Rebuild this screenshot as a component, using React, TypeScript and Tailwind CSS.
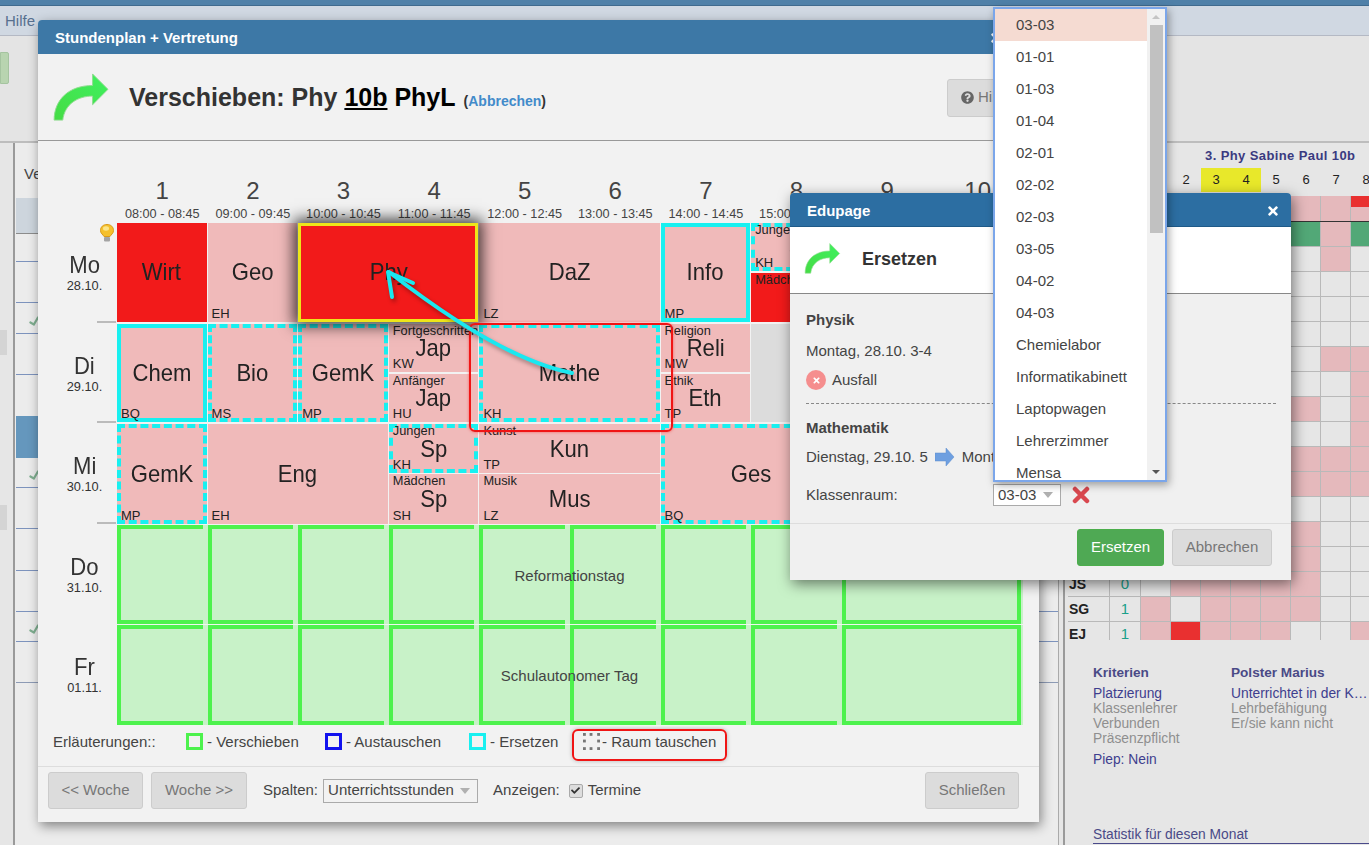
import React from "react";
import { FaQuestionCircle, FaTimes, FaCheck } from "react-icons/fa";

const hours = [
  ["1", "08:00 - 08:45"],
  ["2", "09:00 - 09:45"],
  ["3", "10:00 - 10:45"],
  ["4", "11:00 - 11:45"],
  ["5", "12:00 - 12:45"],
  ["6", "13:00 - 13:45"],
  ["7", "14:00 - 14:45"],
  ["8", "15:00 - 15:45"],
  ["9", "16:00 - 16:45"],
  ["10", "17:00 - 17:45"],
];

const days = [
  ["Mo", "28.10."],
  ["Di", "29.10."],
  ["Mi", "30.10."],
  ["Do", "31.10."],
  ["Fr", "01.11."],
];

const rooms = [
  "01-01", "01-03", "01-04", "02-01", "02-02", "02-03", "03-05", "04-02", "04-03",
  "Chemielabor", "Informatikabinett", "Laptopwagen", "Lehrerzimmer", "Mensa",
];

// g = grey, p = pink, r = red, s = green, t = pink with red top
const rightRows = [
  ["", "", "ggggpppt"],
  ["", "", "gggggsps"],
  ["", "", "ggggggpg"],
  ["", "", "gggggggg"],
  ["", "", "gggggggg"],
  ["", "", "gggggggg"],
  ["", "", "ggggggpp"],
  ["", "", "gggggggp"],
  ["", "", "gggggpgp"],
  ["", "", "gggggggp"],
  ["", "", "gggggppp"],
  ["", "", "gggggppp"],
  ["", "", "gggggggg"],
  ["", "", "gggggpgg"],
  ["", "", "gggggpgg"],
  ["JS", "0", "gpppppgg"],
  ["SG", "1", "pgppppgg"],
  ["EJ", "1", "prpppggp"],
];

const leftRows = [
  { h: "h-[36px]", line: "border-[#8c8c8c] bg-[#cdd5dd]" },
  { h: "h-[28px]", line: "border-[#7d93bd]" },
  { h: "h-[41px]", line: "border-[#7d93bd]" },
  { h: "h-[31px]", line: "border-[#7d93bd]", check: true },
  { h: "h-[41px]", line: "border-[#7d93bd]" },
  { h: "h-[41px]", line: "border-transparent" },
  { h: "h-[42px]", line: "border-[#6597bd] bg-[#6597bd]" },
  { h: "h-[30px]", line: "border-[#7d93bd]", check: true },
  { h: "h-[41px]", line: "border-[#7d93bd]" },
  { h: "h-[42px]", line: "border-[#7d93bd]" },
  { h: "h-[41px]", line: "border-[#7d93bd]" },
  { h: "h-[30px]", line: "border-[#7d93bd]", check: true },
  { h: "h-[41px]", line: "border-[#8d9bb5]" },
];

const CurvedArrow = ({ className = "" }: { className?: string }) => (
  <svg viewBox="0 0 60 52" className={className}>
    <defs>
      <linearGradient id="arrowFill" x1="0" y1="1" x2="1" y2="0">
        <stop offset="0" stopColor="#45dc45" />
        <stop offset="1" stopColor="#3ff05f" />
      </linearGradient>
    </defs>
    <path
      d="M1 49 C1 28 16 13 41 13 L41 1 L57 17 L41 33 L41 24 C26 24 12 32 10 49 Z"
      fill="url(#arrowFill)"
      stroke="#8fdc8f"
      strokeWidth="1"
    />
  </svg>
);

const Bulb = () => (
  <svg viewBox="0 0 14 18" className="h-[18px] w-[14px]">
    <path d="M7 0.5 C3 0.5 0.5 3 0.5 6.5 C0.5 9.5 3 10.5 4 12.5 H10 C11 10.5 13.5 9.5 13.5 6.5 C13.5 3 11 0.5 7 0.5 Z" fill="#f5c02c" stroke="#d99a1b" />
    <ellipse cx="6" cy="4.5" rx="3" ry="2.2" fill="#fbe58a" />
    <rect x="4" y="13" width="6" height="4.5" rx="1" fill="#a4a4a4" />
  </svg>
);

const SwapDots = () => (
  <svg viewBox="0 0 18 18" className="h-[17px] w-[17px]" fill="#777">
    <rect x="0" y="0" width="3" height="3" />
    <rect x="7" y="0" width="3" height="3" />
    <rect x="15" y="0" width="3" height="3" />
    <rect x="0" y="7" width="3" height="3" />
    <rect x="15" y="7" width="3" height="3" />
    <rect x="0" y="15" width="3" height="3" />
    <rect x="7" y="15" width="3" height="3" />
    <rect x="15" y="15" width="3" height="3" />
  </svg>
);

type LessonProps = {
  name: string;
  top?: string;
  room?: string;
  frame?: "solid" | "dashed";
  hot?: boolean;
  className?: string;
};

const Lesson = ({ name, top, room, frame, hot, className = "" }: LessonProps) => (
  <div
    className={`relative flex min-h-0 flex-1 items-center justify-center overflow-hidden text-[#222] ${
      hot ? "bg-[#f21a1a]" : "bg-[#f0baba]"
    } ${className}`}
  >
    {frame === "solid" && <div className="absolute inset-0 border-4 border-[#18f0f0]" />}
    {frame === "dashed" && <div className="absolute inset-0 border-4 border-dashed border-[#18f0f0]" />}
    {top && (
      <span className="absolute left-[4px] top-0 whitespace-nowrap text-[12.8px] leading-[14px]">{top}</span>
    )}
    <span className="relative scale-x-[0.92] text-[24px] leading-[28px]">{name}</span>
    {room && (
      <span className="absolute bottom-0 left-[4px] text-[13px] leading-[16px]">{room}</span>
    )}
  </div>
);

const GreenCell = ({ wide }: { wide?: boolean }) =>
  wide ? (
    <div className="col-span-2 mr-[2px] border-4 border-[#4df24d] bg-[#c8f2c8]" />
  ) : (
    <div className="mr-[5px] border-y-4 border-l-4 border-[#4df24d] bg-[#c8f2c8]" />
  );

const GreenRow = ({ label }: { label: string }) => (
  <div className="relative grid h-[100.6px] grid-cols-10 border-b border-[#eef7ee] bg-[#c8f2c8]">
    {[1, 2, 3, 4, 5, 6, 7, 8].map((n) => (
      <GreenCell key={n} />
    ))}
    <GreenCell wide />
    <div className="absolute left-[362px] top-0 flex h-full w-[181px] items-center justify-center pt-[3px] text-[15px] text-[#444]">
      {label}
    </div>
  </div>
);

const Select = ({ label, className = "" }: { label: string; className?: string }) => (
  <div className={`flex items-center border border-[#aaa] pl-[4px] pr-[7px] text-[15px] text-[#444] ${className}`}>
    <span className="flex-1 whitespace-nowrap">{label}</span>
    <span className="h-0 w-0 border-x-[5px] border-t-[6px] border-x-transparent border-t-[#b0b0b0]" />
  </div>
);

const GreyButton = ({ label, className = "" }: { label: string; className?: string }) => (
  <div className={`flex h-[37px] items-center justify-center rounded-[3px] border border-[#ccc] bg-[#dcdcdc] text-[15px] text-[#777] ${className}`}>
    {label}
  </div>
);

const LegendItem = ({ label, box, className = "" }: { label: string; box: string; className?: string }) => (
  <div className={`flex items-center gap-[4px] text-[15px] text-[#444] ${className}`}>
    <span className={`h-[17px] w-[17px] ${box}`} />
    <span>{label}</span>
  </div>
);

const Timetable = () => (
  <div className="relative ml-[67px] w-[906px]">
    {/* Mo */}
    <div className="grid h-[100.6px] grid-cols-10">
      <Lesson name="Wirt" hot className="mb-[2px] mr-px" />
      <Lesson name="Geo" room="EH" className="mb-[2px] mr-px" />
      <Lesson
        name="Phy"
        hot
        className="z-10 col-span-2 mb-[2px] mr-px border-[3px] border-[#eee51a] shadow-[0_0_14px_4px_rgba(0,0,0,0.75)]"
      />
      <Lesson name="DaZ" room="LZ" className="col-span-2 mb-[2px] mr-px" />
      <Lesson name="Info" room="MP" frame="solid" className="mb-[2px] mr-px" />
      <div className="mb-[2px] mr-px flex flex-col gap-[2px]">
        <Lesson name="S" top="Jungen" room="KH" frame="dashed" />
        <Lesson name="S" top="Mädchen" hot />
      </div>
    </div>
    {/* Di */}
    <div className="grid h-[100.6px] grid-cols-10">
      <Lesson name="Chem" room="BQ" frame="solid" className="mb-[2px] mr-px" />
      <Lesson name="Bio" room="MS" frame="dashed" className="mb-[2px] mr-px" />
      <Lesson name="GemK" room="MP" frame="dashed" className="mb-[2px] mr-px" />
      <div className="mb-[2px] mr-px flex flex-col gap-[2px]">
        <Lesson name="Jap" top="Fortgeschrittene" room="KW" />
        <Lesson name="Jap" top="Anfänger" room="HU" />
      </div>
      <Lesson name="Mathe" room="KH" frame="dashed" className="col-span-2 mb-[2px] mr-px" />
      <div className="mb-[2px] mr-px flex flex-col gap-[2px]">
        <Lesson name="Reli" top="Religion" room="MW" />
        <Lesson name="Eth" top="Ethik" room="TP" />
      </div>
      <div className="mb-[2px] mr-px bg-[#dcdcdc]" />
    </div>
    {/* Mi */}
    <div className="grid h-[100.6px] grid-cols-10">
      <Lesson name="GemK" room="MP" frame="dashed" className="mb-[1px] mr-px" />
      <Lesson name="Eng" room="EH" className="col-span-2 mb-[1px] mr-px" />
      <div className="mb-[1px] mr-px flex flex-col gap-[1px]">
        <Lesson name="Sp" top="Jungen" room="KH" frame="dashed" />
        <Lesson name="Sp" top="Mädchen" room="SH" />
      </div>
      <div className="col-span-2 mb-[1px] mr-px flex flex-col gap-[1px]">
        <Lesson name="Kun" top="Kunst" room="TP" />
        <Lesson name="Mus" top="Musik" room="LZ" />
      </div>
      <Lesson name="Ges" room="BQ" frame="dashed" className="col-span-2 mb-[1px] mr-px" />
    </div>
    <GreenRow label="Reformationstag" />
    <GreenRow label="Schulautonomer Tag" />

    {/* room swap highlight */}
    <div className="absolute left-[352px] top-[100px] z-20 h-[109px] w-[204px] rounded-[6px] border-2 border-[#f01515] shadow-[0_0_3px_rgba(255,0,0,0.5)]" />
    {/* move arrow */}
    <svg
      viewBox="0 0 200 120"
      className="absolute left-[263px] top-[42px] z-20 h-[120px] w-[200px] drop-shadow-[2px_3px_2px_rgba(0,0,0,0.35)]"
    >
      <path d="M192 108 C150 100 90 70 9 7" fill="none" stroke="#1ae8f0" strokeWidth="4" strokeLinecap="round" />
      <path d="M33 18 L8 7 L12 32" fill="none" stroke="#1ae8f0" strokeWidth="4" strokeLinecap="round" strokeLinejoin="round" />
    </svg>
  </div>
);

const MainDialog = () => (
  <div className="absolute left-[38px] top-[20px] z-10 flex h-[802px] w-[1001px] flex-col rounded-t-[4px] bg-[#f2f2f2] shadow-[2px_4px_12px_rgba(0,0,0,0.45)]">
    <div className="flex h-[34px] shrink-0 items-center justify-between rounded-t-[4px] bg-[#3d78a6] pl-[17px] pr-[36px] pt-[2px] text-[15px] font-bold text-white">
      <span>Stundenplan + Vertretung</span>
      <FaTimes className="text-[14px]" />
    </div>
    <div className="flex h-[87px] shrink-0 items-center border-b border-[#999] pl-[14px] pt-[1px]">
      <CurvedArrow className="h-[50px] w-[60px]" />
      <div className="ml-[17px] whitespace-nowrap text-[25px] font-bold text-[#333]">
        Verschieben: Phy <span className="text-black underline">10b</span> <span className="text-black">PhyL</span>
        <span className="ml-[8px] text-[14px] text-[#333]">
          (<span className="text-[#428bca]">Abbrechen</span>)
        </span>
      </div>
      <div className="ml-auto mr-[2px] flex h-[38px] w-[90px] items-center gap-[4px] rounded-[3px] border border-[#ccc] bg-[#dcdcdc] pl-[13px] text-[15px] text-[#777]">
        <FaQuestionCircle className="text-[13px] text-[#666]" />
        <span>Hilfe</span>
      </div>
    </div>

    <div className="relative flex-1 pl-[12px] pt-[35px]">
      <div className="relative z-10 ml-[67px] grid w-[906px] grid-cols-10 text-center text-[#444]">
        {hours.map(([n, time]) => (
          <div key={n} className="flex flex-col">
            <span className="text-[24px] leading-[30px]">{n}</span>
            <span className="text-[12.7px] leading-[17px]">{time}</span>
          </div>
        ))}
      </div>
      <div className="relative">
        <div className="absolute left-0 top-0 z-0 flex w-[67px] flex-col">
          {days.map(([d, date], i) => (
            <div key={d} className="relative flex h-[100.6px] flex-col items-center pl-[2px] pt-[28px] text-[#333]">
              <span className="scale-x-[0.92] text-[24px] leading-[28px]">{d}</span>
              <span className="text-[12.8px] leading-[14px]">{date}</span>
              {i < 3 && <span className="absolute bottom-[1px] right-[1px] h-[2px] w-[19px] bg-[#bbb]" />}
              {i === 0 && (
                <span className="absolute right-[3px] top-[1px]">
                  <Bulb />
                </span>
              )}
            </div>
          ))}
        </div>
        <Timetable />
      </div>

      <div className="flex h-[38px] items-center pb-[6px] pl-[3px] text-[15px] text-[#444]">
        <span className="w-[133px]">Erläuterungen::</span>
        <LegendItem label="- Verschieben" box="border-[3px] border-[#4df24d]" className="w-[139px]" />
        <LegendItem label="- Austauschen" box="border-[3px] border-[#1212ee]" className="w-[144px]" />
        <LegendItem label="- Ersetzen" box="border-[3px] border-[#18f0f0]" className="w-[103px]" />
        <div className="mt-[6px] flex h-[32px] w-[155px] items-center gap-[2px] whitespace-nowrap rounded-[6px] border-2 border-[#f01515] pb-[6px] pl-[9px] shadow-[0_0_4px_rgba(0,0,0,0.25)]">
          <SwapDots />
          <span>- Raum tauschen</span>
        </div>
      </div>
    </div>

    <div className="flex h-[56px] shrink-0 items-center border-t border-[#ddd] pb-[8px] pl-[10px] pr-[20px] text-[15px] text-[#444]">
      <GreyButton label="<< Woche" className="w-[95px]" />
      <GreyButton label="Woche >>" className="ml-[8px] w-[96px]" />
      <span className="ml-[16px]">Spalten:</span>
      <Select label="Unterrichtsstunden" className="ml-[5px] h-[24px] w-[155px]" />
      <span className="ml-[15px]">Anzeigen:</span>
      <span className="ml-[9px] flex h-[14px] w-[14px] items-center justify-center rounded-[2px] border border-[#aaa] bg-[#ddd]">
        <FaCheck className="text-[9px] text-[#333]" />
      </span>
      <span className="ml-[5px]">Termine</span>
      <GreyButton label="Schließen" className="ml-auto w-[94px]" />
    </div>
  </div>
);

const EdupageDialog = () => (
  <div className="absolute left-[790px] top-[193px] z-20 flex h-[387px] w-[501px] flex-col rounded-t-[4px] bg-[#f0f0f0] text-[15px] text-[#444] shadow-[2px_4px_14px_rgba(0,0,0,0.5)]">
    <div className="flex h-[34px] shrink-0 items-center justify-between rounded-t-[4px] border-b border-[#1f5a88] bg-[#2c6ea2] pl-[17px] pr-[11px] pt-[3px] font-bold text-white">
      <span>Edupage</span>
      <FaTimes className="text-[14px]" />
    </div>
    <div className="flex h-[67px] shrink-0 items-center border-b border-[#888] bg-white pb-[2px] pl-[14px]">
      <CurvedArrow className="h-[32px] w-[38px]" />
      <span className="ml-[20px] text-[18px] font-bold text-[#333]">Ersetzen</span>
    </div>
    <div className="flex-1 px-[16px] pt-[16px]">
      <div className="font-bold leading-[20px]">Physik</div>
      <div className="mt-[11px] leading-[20px]">Montag, 28.10. 3-4</div>
      <div className="mt-[9px] flex items-center gap-[6px] leading-[20px]">
        <span className="flex h-[20px] w-[20px] items-center justify-center rounded-full bg-[#f58e8e] text-white">
          <FaTimes className="text-[9px]" />
        </span>
        Ausfall
      </div>
      <div className="mr-[-1px] mt-[13px] border-t border-dashed border-[#888]" />
      <div className="mt-[14px] font-bold leading-[20px]">Mathematik</div>
      <div className="mt-[9px] flex items-center gap-[7px] leading-[20px]">
        Dienstag, 29.10. 5
        <svg viewBox="0 0 20 20" className="h-[20px] w-[20px]">
          <path d="M0 6 H11 V1 L19 10 L11 19 V14 H0 Z" fill="#6e9fe0" stroke="#5d8ccc" strokeWidth="0.5" />
        </svg>
        Montag, 28.10. 3-4
      </div>
      <div className="mt-[17px] flex items-center leading-[20px]">
        <span className="w-[187px]">Klassenraum:</span>
        <Select label="03-03" className="h-[22px] w-[68px] bg-white" />
        <svg viewBox="0 0 18 18" className="ml-[11px] h-[18px] w-[18px]">
          <path d="M3 3 L15 15 M15 3 L3 15" stroke="#d9484f" strokeWidth="4.5" strokeLinecap="round" />
        </svg>
      </div>
    </div>
    <div className="flex h-[57px] shrink-0 items-start justify-end gap-[8px] border-t border-[#ddd] pr-[19px] pt-[5px]">
      <div className="flex h-[37px] w-[87px] items-center justify-center rounded-[3px] border border-[#4cae4c] bg-[#4fa954] text-white">
        Ersetzen
      </div>
      <GreyButton label="Abbrechen" className="w-[100px]" />
    </div>
  </div>
);

const RoomDropdown = () => (
  <div className="absolute left-[993px] top-[7px] z-30 flex h-[475px] w-[174px] overflow-hidden border-2 border-[#7ba6ea] bg-white shadow-[2px_3px_8px_rgba(0,0,0,0.35)]">
    <div className="flex-1 text-[15px] text-[#444]">
      <div className="flex h-[32px] items-center bg-[#f5dbd2] pl-[21px]">03-03</div>
      {rooms.map((r) => (
        <div key={r} className="flex h-[32px] items-center pl-[21px]">
          {r}
        </div>
      ))}
    </div>
    <div className="relative flex w-[18px] flex-col items-center bg-[#f1f1f1]">
      <span className="mt-[6px] h-0 w-0 border-x-[4px] border-b-[4px] border-x-transparent border-b-[#c4c4c4]" />
      <span className="mt-[6px] h-[208px] w-[13px] bg-[#c1c1c1]" />
      <span className="absolute bottom-[6px] h-0 w-0 border-x-[4px] border-t-[4px] border-x-transparent border-t-[#555]" />
    </div>
  </div>
);

const cellColor: Record<string, string> = {
  g: "bg-[#e6e6e6]",
  p: "bg-[#e5b9bc]",
  r: "bg-[#e93030]",
  s: "bg-[#52a877]",
  t: "bg-[#e5b9bc]",
};

const RightPanel = () => (
  <div className="flex-1 overflow-hidden border-l border-[#aaa] pl-[4px]">
    <div className="h-full overflow-hidden border-l-2 border-[#9a9a9a] bg-[#e6e6e6]">
      <div className="ml-[140px] mt-[4px] h-[17px] whitespace-nowrap text-[13px] font-bold leading-[17px] tracking-[0.4px] text-[#3a3a80]">
        3. Phy Sabine Paul 10b
      </div>
      <div className="ml-[76px] mt-[4px] flex h-[24px] w-[360px] text-center text-[13px] leading-[24px] text-[#222]">
        {[1, 2, 3, 4, 5, 6, 7, 8].map((n) => (
          <span key={n} className={`w-[30px] ${n === 3 || n === 4 ? "bg-[#e8e82a]" : ""}`}>
            {n}
          </span>
        ))}
      </div>
      <div className="ml-[3px] mt-[4px] h-[444px] w-[320px] overflow-hidden">
        {rightRows.map(([name, count, cells], i) => (
          <div key={i} className={`flex h-[25px] border-[#b9b9b9] ${i === 0 ? "" : "border-t"} ${i === 1 ? "border-t-[#333]" : ""}`}>
            <span className="w-[42px] border-r border-[#b9b9b9] pl-[1px] text-[14px] font-bold leading-[24px] text-[#222]">{name}</span>
            <span className="w-[31px] border-r border-[#b9b9b9] text-center text-[15px] leading-[24px] text-[#1aa08a]">{count}</span>
            {cells.split("").map((c, j) => (
              <span key={j} className={`relative w-[30px] border-r border-[#b9b9b9] ${cellColor[c]}`}>
                {c === "t" && <span className="absolute inset-x-0 top-0 h-[11px] bg-[#e93030]" />}
              </span>
            ))}
          </div>
        ))}
      </div>
      <div className="ml-[28px] mt-[25px] flex text-[13.8px] leading-[15px] text-[#8f8f8f]">
        <div className="w-[138px]">
          <div className="mb-[3px] h-[18px] text-[13.6px] font-bold text-[#4a4a86]">Kriterien</div>
          <div className="text-[#3e3e8e]">Platzierung</div>
          <div>Klassenlehrer</div>
          <div>Verbunden</div>
          <div>Präsenzpflicht</div>
          <div className="mt-[6px] text-[#3e3e8e]">Piep: Nein</div>
        </div>
        <div className="whitespace-nowrap">
          <div className="mb-[3px] h-[18px] text-[13.6px] font-bold text-[#4a4a86]">Polster Marius</div>
          <div className="text-[#3e3e8e]">Unterrichtet in der K…</div>
          <div>Lehrbefähigung</div>
          <div>Er/sie kann nicht</div>
        </div>
      </div>
      <div className="ml-[28px] mt-[60px] border-b border-[#4a4a8a] pb-[1px] text-[13.8px] leading-[15px] text-[#4a4a86]">
        Statistik für diesen Monat
      </div>
    </div>
  </div>
);

const Background = () => (
  <div className="flex h-full flex-col">
    <div className="h-[6px] shrink-0 border-b border-[#3f6a8e] bg-[#4f80a8]" />
    <div className="flex h-[30px] shrink-0 items-center border-b border-[#b4b9c4] bg-[#d0d8e2] pl-[5px] pt-[1px] text-[15px] text-[#57708f]">
      Hilfe
    </div>
    <div className="relative h-[107px] shrink-0 border-b-2 border-[#bdbdbd] bg-[#e4e4e4]">
      <div className="mt-[16px] h-[32px] w-[9px] rounded-r-[2px] border border-[#a5c4a0] bg-[#b8d4b0]" />
    </div>
    <div className="flex min-h-0 flex-1">
      <div className="relative flex w-[1058px] shrink-0">
        <div className="w-[13px] shrink-0 bg-[#e6e6e6] pt-[187px]">
          <div className="h-[25px] w-[7px] bg-[#d4d4d4]" />
          <div className="mt-[150px] h-[25px] w-[7px] bg-[#d4d4d4]" />
        </div>
        <div className="flex-1 border-l-2 border-[#9a9a9a] bg-[#ececec] pl-px">
          <div className="h-[55px] pl-[8px] pt-[20px] text-[15px] text-[#444]">Vertretung</div>
          {leftRows.map((row, i) => (
            <div key={i} className={`relative border-b ${row.h} ${row.line}`}>
              {row.check && <FaCheck className="absolute bottom-[6px] left-[13px] -rotate-[15deg] text-[11px] text-[#7fae90]" />}
            </div>
          ))}
        </div>
      </div>
      <RightPanel />
    </div>
  </div>
);

export default function App() {
  return (
    <div className="relative h-[845px] w-[1369px] overflow-hidden bg-[#e6e6e6] font-['Liberation_Sans',Arial,sans-serif]">
      <Background />
      <MainDialog />
      <EdupageDialog />
      <RoomDropdown />
    </div>
  );
}
